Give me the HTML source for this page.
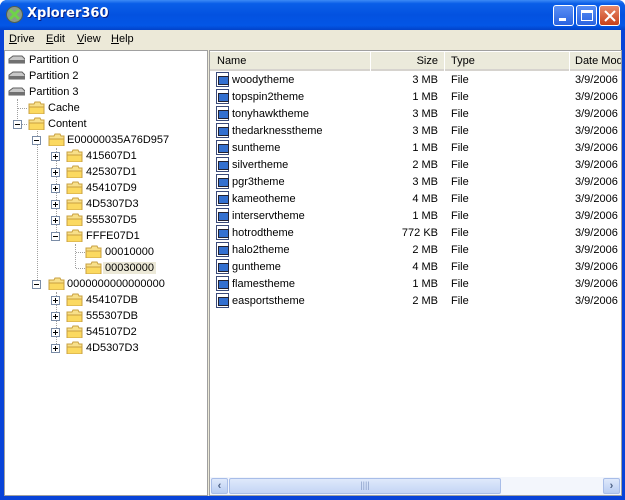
<!DOCTYPE html>
<html><head><style>
*{margin:0;padding:0;box-sizing:border-box}
body{width:625px;height:500px;overflow:hidden;background:#fff;font-family:"Liberation Sans",sans-serif;font-size:11px;position:relative}
.a{position:absolute}
#frame{left:0;top:0;width:625px;height:500px;background:#0843d8;border-radius:7px 7px 0 0;}
#title{left:0;top:0;width:625px;height:30px;border-radius:7px 7px 0 0;background:linear-gradient(#3d8bf6 0%,#0a5ee8 12%,#0352e0 50%,#0356e6 85%,#0242c8 100%)}
#title span{position:absolute;left:27px;top:6px;color:#fff;font-weight:bold;font-size:13px;font-family:"DejaVu Sans",sans-serif;text-shadow:1px 1px #0a1f80}
.btn{top:5px;width:21px;height:21px;border:1px solid #fff;border-radius:3px;background:linear-gradient(#5a8ff5,#2a63e0)}
#body{left:4px;top:30px;width:617px;height:466px;background:#ece9d8}
#menu span{position:absolute;top:33px;font-size:11px}
.pane{background:#fff;border:1px solid #a0a0a0}
.t{position:absolute;white-space:nowrap}
.fold{position:absolute;width:17px;height:13px}
.box{position:absolute;width:9px;height:9px;border:1px solid #7a8ca6;background:#fff}
.box i{position:absolute;left:1px;top:3px;width:5px;height:1px;background:#000}
.box b{position:absolute;left:3px;top:1px;width:1px;height:5px;background:#000}
.ln{position:absolute;border-left:1px dotted #a0a0a0}
.lh{position:absolute;border-top:1px dotted #a0a0a0;height:0}
.fi{position:absolute;width:13px;height:15px;border:1px solid #3a4a7a;background:#fff}
.fi:after{content:"";position:absolute;left:1px;top:3px;width:9px;height:7px;background:#3470d0;border:1px solid #223}
.hd{position:absolute;top:52px;height:19px;background:#ebeadb;border-bottom:2px solid #d6d3ce}
</style></head><body>
<div class="a" id="frame"></div>
<div class="a" id="title">
<svg class="a" style="left:6px;top:6px" width="17" height="17"><circle cx="8.5" cy="8.5" r="8" fill="#8a9a8a" stroke="#506050"/><path d="M4 4L13 13M13 4L4 13" stroke="#6fd24a" stroke-width="3"/></svg>
<span>Xplorer360</span>
<div class="a btn" style="left:553px"><div class="a" style="left:5px;top:12px;width:7px;height:3px;background:#fff"></div></div>
<div class="a btn" style="left:576px"><div class="a" style="left:4px;top:4px;width:12px;height:11px;border:1px solid #fff;border-top:3px solid #fff"></div></div>
<div class="a btn" style="left:599px;background:linear-gradient(#e88a6a,#c8401a)"><svg class="a" style="left:4px;top:4px" width="12" height="12"><path d="M1 1L11 11M11 1L1 11" stroke="#fff" stroke-width="2"/></svg></div>
</div>
<div class="a" id="body"></div>
<div id="menu"><span style="left:9px"><u>D</u>rive</span><span style="left:46px"><u>E</u>dit</span><span style="left:77px"><u>V</u>iew</span><span style="left:111px"><u>H</u>elp</span></div>
<div class="a pane" style="left:4px;top:50px;width:204px;height:446px"></div>
<div class="a pane" style="left:209px;top:50px;width:413px;height:446px"></div>
<div id="tree"></div>
<div class="hd" style="left:210px;width:160px"><span class="t" style="left:7px;top:3px">Name</span></div>
<div class="hd" style="left:371px;width:73px"><span class="t" style="right:6px;top:3px">Size</span></div>
<div class="hd" style="left:445px;width:124px"><span class="t" style="left:6px;top:3px">Type</span></div>
<div class="hd" style="left:570px;width:51px;overflow:hidden"><span class="t" style="left:5px;top:3px">Date Mod</span></div>
<div id="files"></div>
<div class="a" style="left:210px;top:477px;width:411px;height:18px;background:#f3f6fc"></div>
<div class="a" style="left:211px;top:478px;width:17px;height:16px;border:1px solid #a8bde8;border-radius:2px;background:linear-gradient(#dfe9fb,#b9cdf2);font-weight:bold;color:#4d6185;text-align:center;line-height:14px">&lsaquo;</div>
<div class="a" style="left:229px;top:478px;width:272px;height:16px;border:1px solid #a8bde8;border-radius:2px;background:linear-gradient(#dfe9fb,#c4d5f5);text-align:center;line-height:13px;color:#8ca0c8;font-size:9px">||||</div>
<div class="a" style="left:603px;top:478px;width:17px;height:16px;border:1px solid #a8bde8;border-radius:2px;background:linear-gradient(#dfe9fb,#b9cdf2);font-weight:bold;color:#4d6185;text-align:center;line-height:14px">&rsaquo;</div>
<script>
var T=document.getElementById('tree'),h='';
function fold(x,y){return '<svg class="fold" style="left:'+x+'px;top:'+(y-7)+'px" width="17" height="14"><path d="M1 3h5l1 -2h5l1 2h3v10H1z" fill="#f8e08a" stroke="#c8a040"/><path d="M1 6h15v7H1z" fill="#fbd960" stroke="#c8a040"/></svg>';}
function disk(x,y){return '<svg class="fold" style="left:'+x+'px;top:'+(y-5)+'px" width="18" height="11"><path d="M1 4L5 1h9l3 3v4H1z" fill="#c8c8c8" stroke="#606060"/><path d="M1 5h16v3H1z" fill="#707070"/></svg>';}
function txt(x,y,s,bg){return '<span class="t" style="left:'+x+'px;top:'+(y-6)+'px'+(bg?';background:#ece9d8;padding:0 2px;margin-left:-2px':'')+'">'+s+'</span>';}
function box(x,y,s){return '<div class="box" style="left:'+x+'px;top:'+(y-4)+'px"><i></i>'+(s=='+'?'<b></b>':'')+'</div>';}
['Partition 0','Partition 2','Partition 3'].forEach(function(s,i){var y=60+16*i;h+=disk(8,y)+txt(29,y,s);});
h+='<div class="ln" style="left:17px;top:99px;height:26px"></div>';
h+='<div class="lh" style="left:18px;top:108px;width:9px"></div>'+fold(28,108)+txt(48,108,'Cache');
h+=box(13,124,'−')+'<div class="lh" style="left:22px;top:124px;width:5px"></div>'+fold(28,124)+txt(48,124,'Content');
h+='<div class="ln" style="left:37px;top:131px;height:153px"></div>';
h+=box(32,140,'−')+fold(48,140)+txt(67,140,'E00000035A76D957');
var c=['415607D1','425307D1','454107D9','4D5307D3','555307D5'];
h+='<div class="ln" style="left:56px;top:148px;height:88px"></div>';
c.forEach(function(s,i){var y=156+16*i;h+=box(51,y,'+')+fold(66,y)+txt(86,y,s);});
h+=box(51,236,'−')+fold(66,236)+txt(86,236,'FFFE07D1');
h+='<div class="ln" style="left:75px;top:244px;height:24px"></div>';
h+='<div class="lh" style="left:76px;top:252px;width:9px"></div>'+fold(85,252)+txt(105,252,'00010000');
h+='<div class="lh" style="left:76px;top:268px;width:9px"></div>'+fold(85,268)+txt(105,268,'00030000',1);
h+=box(32,284,'−')+fold(48,284)+txt(67,284,'0000000000000000');
h+='<div class="ln" style="left:56px;top:292px;height:56px"></div>';
['454107DB','555307DB','545107D2','4D5307D3'].forEach(function(s,i){var y=300+16*i;h+=box(51,y,'+')+fold(66,y)+txt(86,y,s);});
T.innerHTML=h;
var F=[['woodytheme','3 MB'],['topspin2theme','1 MB'],['tonyhawktheme','3 MB'],['thedarknesstheme','3 MB'],['suntheme','1 MB'],['silvertheme','2 MB'],['pgr3theme','3 MB'],['kameotheme','4 MB'],['interservtheme','1 MB'],['hotrodtheme','772 KB'],['halo2theme','2 MB'],['guntheme','4 MB'],['flamestheme','1 MB'],['easportstheme','2 MB']];
h='';F.forEach(function(f,i){var y=80+17*i;
h+='<div class="fi" style="left:216px;top:'+(y-8)+'px"></div>';
h+='<span class="t" style="left:232px;top:'+(y-6)+'px">'+f[0]+'</span>';
h+='<span class="t" style="right:187px;top:'+(y-6)+'px">'+f[1]+'</span>';
h+='<span class="t" style="left:451px;top:'+(y-6)+'px">File</span>';
h+='<span class="t" style="left:575px;top:'+(y-6)+'px;width:46px;overflow:hidden">3/9/2006</span>';});
document.getElementById('files').innerHTML=h;
</script>
</body></html>
